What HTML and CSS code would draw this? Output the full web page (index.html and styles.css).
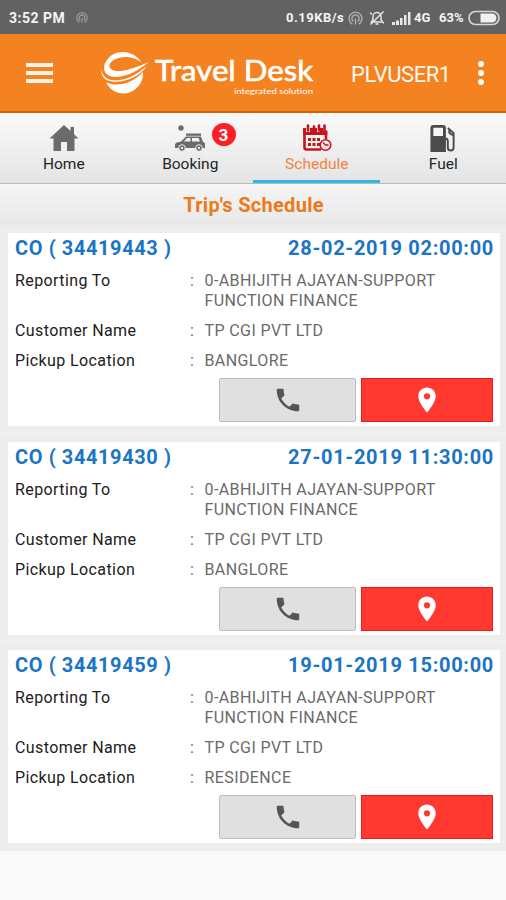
FILE: index.html
```html
<!DOCTYPE html>
<html lang="en">
<head>
    <meta charset="UTF-8">
    <meta name="viewport" content="width=device-width, initial-scale=1.0">
    <title>Travel Desk</title>
    <link rel="stylesheet" href="styles.css">
</head>
<body>

<div class="status-bar">
    <span class="time">3:52 PM</span>
    <svg class="hotspot" width="12" height="12" viewBox="0 0 14 14" fill="none" stroke="#a5a5a5" stroke-width="1.2">
        <path d="M4 12.2a6 6 0 1 1 6 0M5 9.8a3.4 3.4 0 1 1 4 0M7 7v5.5"/>
    </svg>
    <span class="speed">0.19KB/s</span>
    <svg class="cast" width="15" height="15" viewBox="0 0 14 14" fill="none" stroke="#b5b5b5" stroke-width="1.2">
        <path d="M4 12.2a6 6 0 1 1 6 0M5 9.8a3.4 3.4 0 1 1 4 0M7 7v5.5"/>
    </svg>
    <svg class="muted" width="16" height="16" viewBox="0 0 16 16" fill="none" stroke="#e4e4e4" stroke-width="1.5">
        <path d="M2.5 12h11L12 9.5V6.5a4 4 0 0 0-8 0v3zM6.5 14h3M14.500 1.500l-13 13M1 3l2 1M13 12l2 1"/>
    </svg>
    <svg class="signal" width="19" height="13" viewBox="0 0 19 13" fill="#e8e8e8">
        <path d="M0 10h3v3H0zM4 8.500h3V13H4zM8 6h2.500v7H8zM12 3h2.500v10H12zM16 0h2.500v13H16z"/>
    </svg>
    <span class="network">4G</span>
    <span class="percent">63%</span>
    <svg class="battery" width="32" height="16" viewBox="0 0 32 16">
        <rect x="1" y="1.5" width="30" height="13" rx="6.5" fill="none" stroke="#d8d8d8" stroke-width="1.6"/>
        <path d="M12.500 3.500H24a4.500 4.500 0 0 1 0 9H12.500z" fill="#f1f1f1"/>
    </svg>
</div>

<header class="header">
    <button class="menu"><i></i><i></i><i></i></button>
    <svg class="logo" width="214" height="50" viewBox="0 0 214 50" fill="#fff">
        <path d="M40 14C31 0 9 1 4 16L8 18C10 9 28 5 40 14z"/>
        <path d="M4 15C0 27 10 31 22 28C32 26 40 20 48 14C36 19 28 22 20 23C11 24 6 20 9 13z"/>
        <path d="M0 21C2 33 13 34 24 31C34 28 41 22 46 18C36 33 10 38 3 30C1 27 0 25 0 21z"/>
        <path d="M5 34C16 40 32 35 42 24C43 35 34 45 23 45.500C15 45.500 8 41 5 34z"/>
        <text class="logo-name" x="54" y="32.5" textLength="158" lengthAdjust="spacingAndGlyphs">Travel Desk</text>
        <text class="logo-sub" x="133" y="46" textLength="79" lengthAdjust="spacingAndGlyphs">integrated solution</text>
    </svg>
    <span class="user">PLVUSER1</span>
    <button class="more"><i></i><i></i><i></i></button>
</header>

<nav class="tabs">
    <a class="tab">
        <svg width="30" height="28" viewBox="0 0 30 28" fill="#6b6b6b">
            <path d="M15 1L0.500 14.500H4.500V27H12V18h6v9h7.500V14.500h4L25 10.200V3h-3.500v4z"/>
        </svg>
        <span>Home</span>
    </a>
    <a class="tab">
        <svg width="32" height="28" viewBox="0 0 32 28" fill="#6b6b6b">
            <circle cx="7" cy="4" r="2.7"/>
            <path d="M12 9.500h15v2.300H12z"/>
            <path fill-rule="evenodd" d="M12 12.500h15l2 5.500 2 1v5H1v-3.500l1-1.800 5-1.200zM13 14l-3 3.500h6.500V14zM18 14v3.500h8l-1.500-3.500z"/>
            <g stroke="#eee" stroke-width="1"><circle cx="8" cy="24" r="3.300"/><circle cx="25" cy="24" r="3.300"/></g>
            <path d="M7 23h2v2H7zM24 23h2v2h-2z" fill="#eee"/>
        </svg>
        <span>Booking</span>
        <b class="badge">3</b>
    </a>
    <a class="tab active">
        <svg width="30" height="28" viewBox="0 0 30 28">
            <path d="M2.500 8v15.500q0 2 2 2H19M24 6.500V15" fill="none" stroke="#c4161c" stroke-width="2.600"/>
            <path d="M1 4h3v4h4V4h7v4h3V4h3v3h4.300v4H1z" fill="#c4161c"/>
            <path d="M6 1.500v5M12 2.500v4M17 1.500v5M22.500 1.500v5" fill="none" stroke="#c4161c" stroke-width="2.600" stroke-linecap="round"/>
            <path d="M6 14h3v3H6zM10.500 14h3v3h-3zM15 14h3v3h-3zM6 19h3v3H6zM10.500 19h3v3h-3zM15 19h3v3h-3z" fill="#c4161c"/>
            <circle cx="23.500" cy="21" r="5.300" fill="#f3e9e9" stroke="#c4161c" stroke-width="1.600"/>
            <path d="M21 18.500l2.500 2.500h3" fill="none" stroke="#c4161c" stroke-width="1.300"/>
        </svg>
        <span>Schedule</span>
    </a>
    <a class="tab fuel">
        <svg width="28" height="29" viewBox="0 0 28 29">
            <path fill="#4b4b4b" fill-rule="evenodd" d="M4 1h10q3 0 3 3v25H1V4q0-3 3-3zM4 4v8.500h10V4z"/>
            <path d="M19 4l6 5.500V24q0 3.500-3 3.500t-3-3.500v-6q0-3-2.500-3M20.500 6.500q-1 3.500 4 5" fill="none" stroke="#4b4b4b" stroke-width="2"/>
        </svg>
        <span>Fuel</span>
    </a>
</nav>

<h1 class="title">Trip's Schedule</h1>

<main class="trips" id="trips"></main>

<script>
    const trips = [
        { id: '34419443', date: '28-02-2019 02:00:00', pickup: 'BANGLORE' },
        { id: '34419430', date: '27-01-2019 11:30:00', pickup: 'BANGLORE' },
        { id: '34419459', date: '19-01-2019 15:00:00', pickup: 'RESIDENCE' }
    ];

    // Build one card per trip
    document.getElementById('trips').innerHTML = trips.map(trip => `
        <section class="trip">
            <div class="card">
                <div class="card-head">
                    <span class="trip-id">CO ( ${trip.id} )</span>
                    <span class="trip-date">${trip.date}</span>
                </div>
                <dl class="details">
                    <dt>Reporting To</dt><dd>:</dd><dd>0-ABHIJITH AJAYAN-SUPPORT<br>FUNCTION FINANCE</dd>
                    <dt>Customer Name</dt><dd>:</dd><dd>TP CGI PVT LTD</dd>
                    <dt>Pickup Location</dt><dd>:</dd><dd>${trip.pickup}</dd>
                </dl>
                <div class="actions">
                    <button class="call">
                        <svg width="30" height="30" viewBox="0 0 24 24" fill="#555"><path d="M6.620 10.790c1.440 2.830 3.760 5.140 6.590 6.590l2.200-2.200c.27-.27.67-.36 1.020-.24 1.120.37 2.330.57 3.570.57.550 0 1 .45 1 1V20c0 .55-.45 1-1 1-9.390 0-17-7.610-17-17 0-.55.45-1 1-1h3.500c.55 0 1 .45 1 1 0 1.250.2 2.450.57 3.570.11.350.03.740-.25 1.020l-2.200 2.200z"/></svg>
                    </button>
                    <button class="locate">
                        <svg width="30" height="30" viewBox="0 0 24 24" fill="#fff"><path d="M12 2C8.130 2 5 5.130 5 9c0 5.250 7 13 7 13s7-7.750 7-13c0-3.870-3.130-7-7-7zm0 9.500a2.500 2.500 0 0 1 0-5 2.500 2.500 0 0 1 0 5z"/></svg>
                    </button>
                </div>
            </div>
        </section>`).join('');
</script>

</body>
</html>
```
FILE: styles.css
```css
* {
    box-sizing: border-box;
}

body {
    margin: 0;
    height: 900px;
    overflow: hidden;
    background: #fafafa;
    font-family: Roboto, sans-serif;
}

button {
    padding: 0;
    border: none;
    background: none;
}

.status-bar {
    display: flex;
    align-items: center;
    height: 34px;
    padding: 2px 6px 0 9px;
    background: #626262;
    color: #f5f5f5;
    font-size: 14px;
    font-weight: bold;
    line-height: 16px;
    white-space: nowrap;
}

.time {
    width: 56px;
    letter-spacing: 0.5px;
}

.hotspot {
    margin-left: 11px;
}

.speed {
    margin-left: auto;
    width: 60px;
    font-size: 13px;
    letter-spacing: 0.5px;
}

.cast {
    margin-left: 2px;
}

.muted {
    margin-left: 6px;
}

.signal {
    margin-left: 7px;
}

.network {
    margin-left: 3px;
    width: 25px;
    font-size: 13px;
}

.percent {
    width: 28px;
    font-size: 13px;
}

.battery {
    margin-left: 1px;
}

.header {
    display: flex;
    align-items: center;
    height: 79px;
    padding-left: 26px;
    background: #f58220;
    border-bottom: 2px solid #cf6512;
}

.menu {
    display: flex;
    flex-direction: column;
    gap: 4px;
    width: 27px;
}

.menu i {
    height: 4px;
    background: #fff3e6;
}

.logo {
    margin-left: 48px;
}

.logo-name {
    font: 400 28px Lato, sans-serif;
    stroke: #fff;
    stroke-width: 0.6px;
}

.logo-sub {
    font: 7px Lato, sans-serif;
}

.user {
    width: 98px;
    margin-left: 36px;
    padding-top: 3px;
    color: #fff8f0;
    font-size: 22px;
    letter-spacing: -0.5px;
}

.more {
    display: flex;
    flex-direction: column;
    gap: 3px;
    margin-left: 29px;
}

.more i {
    width: 6px;
    height: 6px;
    border-radius: 50%;
    background: #fff;
}

.tabs {
    display: grid;
    grid-template-columns: repeat(4, 1fr);
    height: 71px;
    background: linear-gradient(#fafafa, #e4e4e4);
    border-bottom: 1px solid #bbb;
}

.tab {
    position: relative;
    display: flex;
    flex-direction: column;
    align-items: center;
    padding: 11px 0 0 1px;
    color: #252525;
    font-size: 15.5px;
    line-height: 20px;
}

.tab svg {
    height: 28px;
    margin-bottom: 2px;
}

.tab.active {
    color: #f48345;
    border-bottom: 3px solid #33b5e5;
}

.badge {
    position: absolute;
    top: 10px;
    left: 85px;
    width: 24px;
    height: 23px;
    border-radius: 50%;
    background: #fa2025;
    color: #fff;
    font-size: 17px;
    line-height: 24px;
    text-align: center;
}

.title {
    height: 41px;
    margin: 0;
    padding-left: 1px;
    background: linear-gradient(#f5f5f5, #e8e8e8);
    color: #eb7a1c;
    font-size: 20px;
    font-weight: bold;
    line-height: 43px;
    letter-spacing: 0.3px;
    text-align: center;
}

.trips {
    background: #ededed;
}

.trip {
    height: 208.5px;
    padding: 8px 6px 0 8px;
    border-bottom: 1px solid #f5f5f5;
}

.trip:last-child {
    border-bottom: none;
}

.card {
    height: 193px;
    padding: 4px 7px 0;
    background: #fff;
}

.card-head {
    display: flex;
    justify-content: space-between;
    color: #1b75c4;
    font-size: 20px;
    font-weight: bold;
    line-height: 22px;
}

.trip-id {
    letter-spacing: 0.6px;
}

.trip-date {
    margin-right: -1px;
    letter-spacing: 0.7px;
}

.details {
    display: grid;
    grid-template-columns: 175px 14.5px 1fr;
    row-gap: 10px;
    margin: 12px 0 0;
    color: #202020;
    font-size: 16px;
    line-height: 20px;
    letter-spacing: 0.4px;
}

.details dd {
    margin: 0;
    color: #6a6a6a;
}

.actions {
    display: flex;
    justify-content: flex-end;
    gap: 5px;
    margin-top: 7px;
}

.actions button {
    display: flex;
    align-items: center;
    justify-content: center;
    height: 44px;
}

.call {
    width: 137px;
    border: 1px solid #bdbdbd;
    border-radius: 2px;
    background: #e0e0e0;
}

.locate {
    width: 132px;
    border: 1px solid #e51c1c;
    background: #ff3830;
}
```
